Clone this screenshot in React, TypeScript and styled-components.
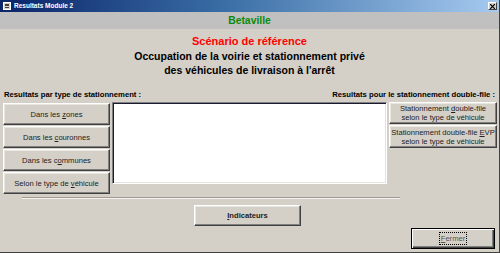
import React from "react";
import styled, { createGlobalStyle } from "styled-components";

const GlobalStyle = createGlobalStyle`
  html, body { margin: 0; padding: 0; background: #d4d0c8; }
  * { box-sizing: border-box; }
`;

const Window = styled.div`
  width: 500px;
  height: 253px;
  background: #d4d0c8;
  border-right: 1px solid #404040;
  border-bottom: 1px solid #404040;
  display: flex;
  flex-direction: column;
  font-family: "Liberation Sans", Arial, sans-serif;
  color: #000;
  overflow: hidden;
`;

const TitleBar = styled.div`
  height: 12px;
  background: linear-gradient(to right, #0a246a 0%, #3a6ea5 45%, #a6caf0 100%);
  display: flex;
  align-items: center;
  padding: 0 2px 0 3px;
  gap: 3px;
`;

const TitleIcon = styled.div`
  width: 8px;
  height: 8px;
  background: #d4d0c8;
  border: 1px solid #fff;
  display: flex;
  flex-direction: column;
  justify-content: space-around;
  padding: 1px;
`;

const TitleIconLine = styled.div`
  height: 1px;
  background: #404040;
`;

const TitleText = styled.span`
  flex: 1;
  color: #fff;
  font-weight: bold;
  font-size: 6.5px;
  line-height: 12px;
`;

const CloseBox = styled.div`
  width: 9px;
  height: 8px;
  background: #d4d0c8;
  border: 1px solid;
  border-color: #fff #404040 #404040 #fff;
  display: flex;
  align-items: center;
  justify-content: center;
`;

const CityBand = styled.div`
  height: 17px;
  background: #c0c0c0;
  display: flex;
  align-items: center;
  justify-content: center;
  color: #0b8a0b;
  font-weight: bold;
  font-size: 10.4px;
`;

const Scenario = styled.div`
  margin-top: 6px;
  text-align: center;
  color: #ff0000;
  font-weight: bold;
  font-size: 11px;
  line-height: 13px;
`;

const Title = styled.div`
  margin-top: 1px;
  text-align: center;
  font-weight: bold;
  font-size: 10.5px;
  line-height: 14px;
`;

const LabelRow = styled.div`
  margin-top: 13px;
  display: flex;
  justify-content: space-between;
  padding: 0 4px 0 4px;
  font-weight: bold;
  font-size: 7.7px;
  line-height: 10px;
`;

const MainRow = styled.div`
  margin-top: 2px;
  display: grid;
  grid-template-columns: 107px 1fr 108px;
  gap: 2px;
  padding: 0 2px 0 3px;
  align-items: start;
`;

const ButtonColumn = styled.div<{ $offset?: number }>`
  display: flex;
  flex-direction: column;
  gap: 1px;
  margin-top: ${(p) => p.$offset ?? 0}px;
`;

const WinButton = styled.button<{ $h?: number; $bold?: boolean; $default?: boolean }>`
  height: ${(p) => p.$h ?? 22}px;
  width: 100%;
  margin: 0;
  padding: 0;
  background: #d4d0c8;
  border: 1px solid;
  border-color: ${(p) => (p.$default ? "#000" : "#fff #404040 #404040 #fff")};
  box-shadow: ${(p) =>
    p.$default
      ? "inset 1px 1px #fff, inset -1px -1px #404040, inset -2px -2px #808080"
      : "inset -1px -1px #808080, inset 1px 1px #e8e6e0"};
  font-family: "Liberation Sans", Arial, sans-serif;
  font-size: 7.6px;
  font-weight: ${(p) => (p.$bold ? "bold" : "normal")};
  line-height: 9px;
  color: #222;
  text-align: center;
  white-space: nowrap;
  display: flex;
  align-items: center;
  justify-content: center;
`;

const ListBox = styled.div`
  height: 82px;
  background: #fff;
  border: 1px solid;
  border-color: #808080 #fff #fff #808080;
  box-shadow: inset 1px 1px #1a1a30, inset -1px -1px #e4e2dc;
`;

const Separator = styled.div`
  margin: 3px 0 0 22px;
  width: 378px;
  height: 2px;
  border-top: 1px solid #a09c94;
  border-bottom: 1px solid #f4f2ee;
`;

const CenterRow = styled.div`
  margin-top: 6px;
  display: flex;
  justify-content: center;
  padding-right: 4px;
`;

const EndRow = styled.div`
  margin-top: 2px;
  display: flex;
  justify-content: flex-end;
  padding-right: 4px;
`;

const FixedWidth = styled.div<{ $w: number }>`
  width: ${(p) => p.$w}px;
`;

const Focus = styled.span`
  outline: 1px dotted #000;
  outline-offset: 1px;
  color: #555;
`;

const Key = styled.u`
  text-decoration: underline;
`;

export default function App() {
  return (
    <>
      <GlobalStyle />
      <Window>
        <TitleBar>
          <TitleIcon>
            <TitleIconLine />
            <TitleIconLine />
            <TitleIconLine />
          </TitleIcon>
          <TitleText>Resultats Module 2</TitleText>
          <CloseBox>
            <svg width="5" height="5" viewBox="0 0 5 5">
              <path d="M0 0L5 5M5 0L0 5" stroke="#000" strokeWidth="1.2" />
            </svg>
          </CloseBox>
        </TitleBar>
        <CityBand>Betaville</CityBand>
        <Scenario>Scénario de référence</Scenario>
        <Title>
          Occupation de la voirie et stationnement privé
          <br />
          des véhicules de livraison à l'arrêt
        </Title>
        <LabelRow>
          <span>Resultats par type de stationnement :</span>
          <span>Resultats pour le stationnement double-file :</span>
        </LabelRow>
        <MainRow>
          <ButtonColumn $offset={1}>
            <WinButton>
              <span>
                Dans les <Key>z</Key>ones
              </span>
            </WinButton>
            <WinButton>
              <span>
                Dans les <Key>c</Key>ouronnes
              </span>
            </WinButton>
            <WinButton>
              <span>
                Dans les c<Key>o</Key>mmunes
              </span>
            </WinButton>
            <WinButton>
              <span>
                Selon le type de <Key>v</Key>éhicule
              </span>
            </WinButton>
          </ButtonColumn>
          <ListBox />
          <ButtonColumn>
            <WinButton>
              <span>
                Stationnement <Key>d</Key>ouble-file
                <br />
                selon le type de véhicule
              </span>
            </WinButton>
            <WinButton $h={23}>
              <span>
                Stationnement double-file <Key>E</Key>VP
                <br />
                selon le type de véhicule
              </span>
            </WinButton>
          </ButtonColumn>
        </MainRow>
        <Separator />
        <CenterRow>
          <FixedWidth $w={107}>
            <WinButton $h={21} $bold>
              <span>
                <Key>I</Key>ndicateurs
              </span>
            </WinButton>
          </FixedWidth>
        </CenterRow>
        <EndRow>
          <FixedWidth $w={84}>
            <WinButton $h={21} $default>
              <Focus>
                <Key>F</Key>ermer
              </Focus>
            </WinButton>
          </FixedWidth>
        </EndRow>
      </Window>
    </>
  );
}
